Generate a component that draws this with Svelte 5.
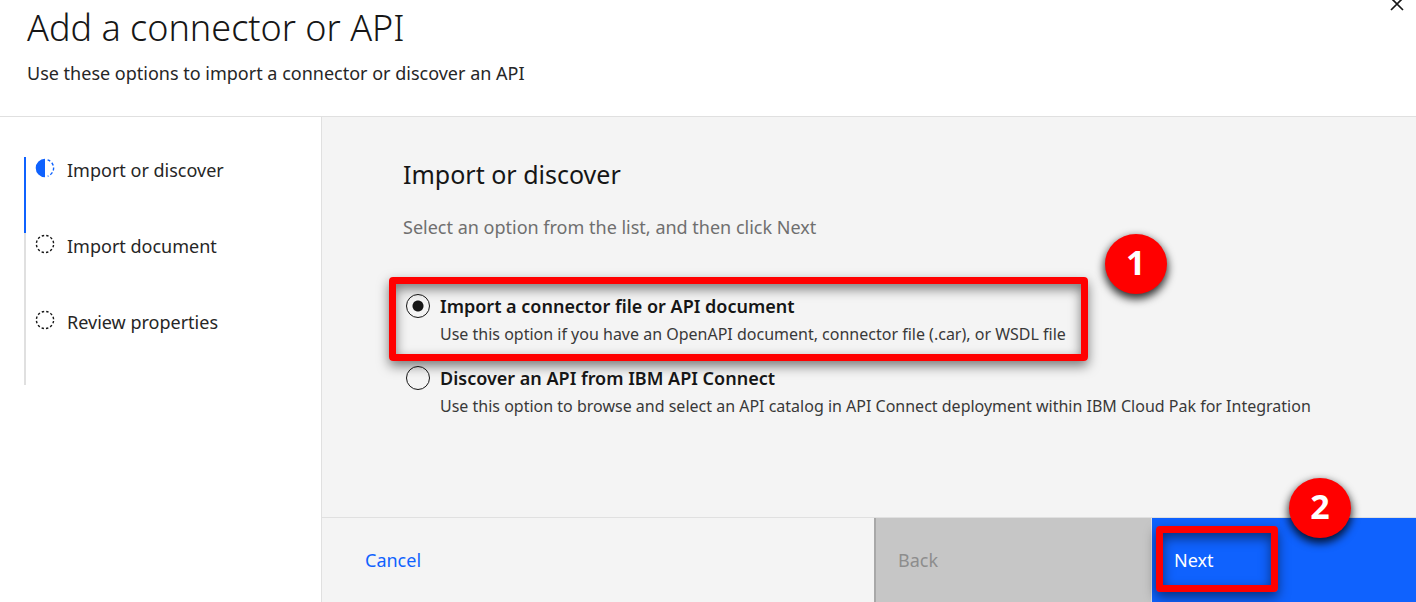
<script>
  const steps = [
    { label: 'Import or discover', current: true },
    { label: 'Import document', current: false },
    { label: 'Review properties', current: false }
  ];

  const options = [
    {
      id: 'import',
      title: 'Import a connector file or API document',
      text: 'Use this option if you have an OpenAPI document, connector file (.car), or WSDL file'
    },
    {
      id: 'discover',
      title: 'Discover an API from IBM API Connect',
      text: 'Use this option to browse and select an API catalog in API Connect deployment within IBM Cloud Pak for Integration'
    }
  ];

  let selected = $state('import');
</script>

<div class="page">
  <header>
    <div>
      <h1>Add a connector or API</h1>
      <p>Use these options to import a connector or discover an API</p>
    </div>
    <button class="close" type="button" aria-label="Close">
      <svg width="14" height="14" viewBox="0 0 14 14" aria-hidden="true">
        <path d="M1 1 L13 13 M13 1 L1 13" stroke="#161616" stroke-width="1.7" fill="none" />
      </svg>
    </button>
  </header>

  <div class="body">
    <nav>
      <ol>
        {#each steps as step}
          <li class:current={step.current}>
            <svg width="20" height="20" viewBox="0 0 20 20" aria-hidden="true">
              {#if step.current}
                <path d="M10 .7 A9.3 9.3 0 0 0 10 19.3 Z" fill="#0f62fe" />
                <path
                  d="M12.6 1.8 A8.6 8.6 0 0 1 12.6 18.2"
                  fill="none"
                  stroke="#0f62fe"
                  stroke-width="1.4"
                  stroke-dasharray="3 2.1"
                />
              {:else}
                <circle
                  cx="10"
                  cy="10"
                  r="8.6"
                  fill="none"
                  stroke="#161616"
                  stroke-width="1.4"
                  stroke-dasharray="2.4 2.1"
                  stroke-dashoffset="-1"
                />
              {/if}
            </svg>
            <span>{step.label}</span>
          </li>
        {/each}
      </ol>
    </nav>

    <main>
      <section>
        <h2>Import or discover</h2>
        <p class="hint">Select an option from the list, and then click Next</p>
        <div class="options">
          {#each options as option}
            <div class="option">
              <input type="radio" name="source" id={option.id} value={option.id} bind:group={selected} />
              <label for={option.id}>
                <strong>{option.title}</strong>
                <span>{option.text}</span>
              </label>
              {#if option.id === 'import'}
                <i class="frame frame-option"></i>
                <b class="badge badge-option">1</b>
              {/if}
            </div>
          {/each}
        </div>
      </section>

      <footer>
        <button class="cancel" type="button">Cancel</button>
        <button class="back" type="button" disabled>Back</button>
        <button class="next" type="button">
          Next
          <i class="frame frame-next"></i>
          <b class="badge badge-next">2</b>
        </button>
      </footer>
    </main>
  </div>
</div>

<style>
  :global(body) {
    margin: 0;
  }

  .page {
    display: flex;
    flex-direction: column;
    min-height: 100vh;
    background: #fff;
    color: #161616;
    font: 18px/24px 'Noto Sans', sans-serif;
  }

  h1,
  h2,
  p,
  ol {
    margin: 0;
    padding: 0;
  }

  header {
    display: flex;
    justify-content: space-between;
    align-items: flex-start;
    padding: 4px 12px 31px 27px;
    border-bottom: 1px solid #e0e0e0;
  }

  h1 {
    font-size: 36px;
    font-weight: 350;
    line-height: 48px;
  }

  header p {
    margin-top: 9px;
    color: #262626;
  }

  .close {
    display: flex;
    margin-top: -7px;
    padding: 0;
    border: 0;
    background: none;
  }

  .body {
    display: flex;
    flex: 1;
  }

  nav {
    box-sizing: border-box;
    width: 322px;
    flex: none;
    padding: 40px 24px;
    border-right: 1px solid #e0e0e0;
  }

  ol {
    list-style: none;
  }

  li {
    display: flex;
    align-items: flex-start;
    gap: 12px;
    box-sizing: border-box;
    height: 76px;
    padding: 1px 0 0 9px;
    border-left: 2px solid #e0e0e0;
    color: #262626;
  }

  li.current {
    border-color: #0f62fe;
  }

  main {
    display: flex;
    flex: 1;
    flex-direction: column;
    min-width: 0;
    background: #f4f4f4;
  }

  section {
    flex: 1;
    padding: 41px 81px;
  }

  h2 {
    font-size: 25px;
    font-weight: 400;
    line-height: 32px;
  }

  .hint {
    margin-top: 25px;
    color: #6f6f6f;
  }

  .options {
    display: flex;
    flex-direction: column;
    align-items: flex-start;
    gap: 20px;
    margin-top: 55px;
  }

  .option {
    position: relative;
    display: flex;
    align-items: flex-start;
    gap: 10px;
    padding-left: 3px;
  }

  input {
    flex: none;
    width: 24px;
    height: 24px;
    margin: 0;
    appearance: none;
    border: 1px solid #161616;
    border-radius: 50%;
  }

  input:checked {
    background: radial-gradient(circle, #161616 5px, transparent 6px);
  }

  label strong,
  label span {
    display: block;
  }

  label strong {
    font-weight: 600;
  }

  label span {
    margin-top: 4px;
    color: #393939;
    font-size: 16px;
  }

  footer {
    display: grid;
    grid-template-columns: 552fr 278fr 264fr;
    border-top: 1px solid #e0e0e0;
  }

  footer button {
    position: relative;
    min-height: 84px;
    padding: 0 22px;
    border: 0;
    font: inherit;
    text-align: left;
  }

  .cancel {
    padding-left: 43px;
    background: none;
    color: #0f62fe;
  }

  .back {
    border-left: 2px solid #a8a8a8;
    border-right: 1px solid #e0e0e0;
    background: #c6c6c6;
    color: #8d8d8d;
  }

  .next {
    background: #0f62fe;
    color: #fff;
  }

  .frame {
    position: absolute;
    box-sizing: border-box;
    border: 7px solid #f00;
    border-radius: 4px;
    box-shadow:
      0 5px 12px rgb(0 0 0 / 50%),
      inset 0 5px 12px rgb(0 0 0 / 50%);
    pointer-events: none;
  }

  .frame-option {
    inset: -17px -22px -15px -14px;
  }

  .frame-next {
    top: 8px;
    left: 4px;
    width: 122px;
    height: 66px;
  }

  .badge {
    position: absolute;
    z-index: 1;
    width: 62px;
    height: 60px;
    border-radius: 50%;
    background: #f00;
    box-shadow: 0 4px 9px 1px rgb(0 0 0 / 80%);
    color: #fff;
    font: 700 34px/56px 'Open Sans', sans-serif;
    text-align: center;
    pointer-events: none;
  }

  .badge-option {
    top: -60px;
    right: -101px;
  }

  .badge-next {
    top: -40px;
    left: 137px;
  }
</style>
